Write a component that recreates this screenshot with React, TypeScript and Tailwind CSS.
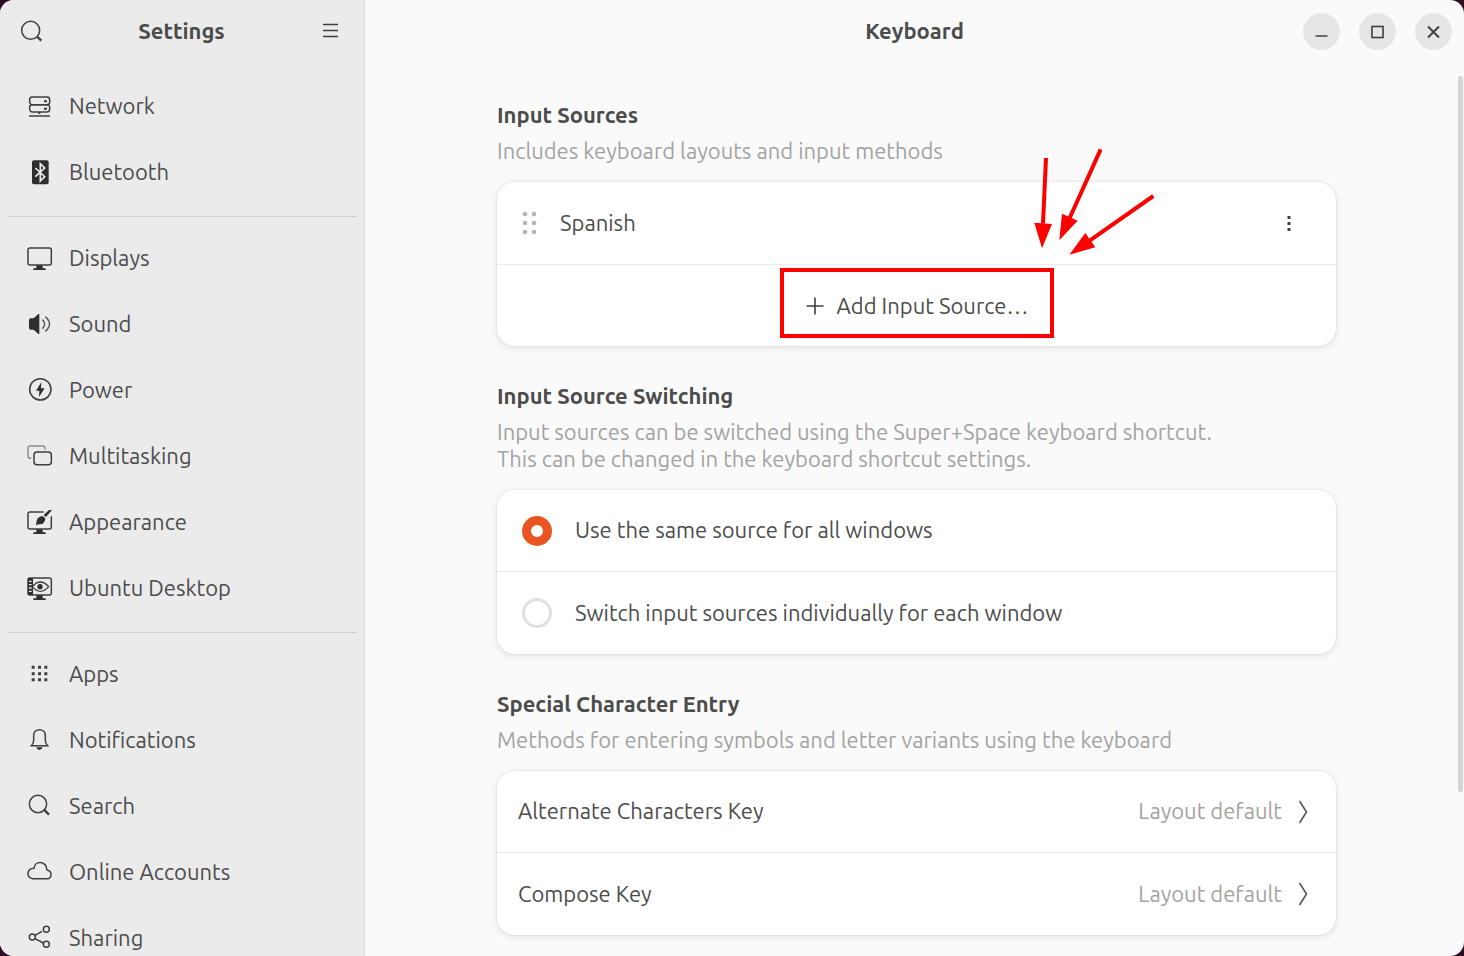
import { useState } from "react";
import type { ReactNode } from "react";

function Icon({ children }: { children: ReactNode }) {
  return (
    <svg
      viewBox="0 0 78 78"
      className="size-[26px] shrink-0"
      fill="none"
      stroke="#3f3f3f"
      strokeWidth="4.5"
      aria-hidden="true"
    >
      {children}
    </svg>
  );
}

const monitorStand = (
  <path d="M28 61H47V70H56V75H19V70H28Z" fill="#2e2e2e" stroke="none" />
);

const magnifier = (
  <>
    <circle cx="33" cy="33" r="26" />
    <path d="M51 50L66 65" strokeWidth="7" />
  </>
);

const icons: Record<string, ReactNode> = {
  Network: (
    <>
      <rect x="8" y="12" width="60" height="23" rx="8" />
      <rect x="8" y="35" width="60" height="22" rx="8" />
      <path d="M51 25H60M51 47H60M37 57V63" strokeWidth="6" />
      <path d="M6 69H69" />
    </>
  ),
  Bluetooth: (
    <>
      <rect x="15" y="4" width="50" height="72" rx="6" fill="#2e2e2e" stroke="none" />
      <path d="M25 27L53 53L40 66V14L53 27L25 53" stroke="#ebebeb" strokeWidth="5" />
    </>
  ),
  Displays: (
    <>
      <rect x="3" y="9" width="70" height="51" rx="6" />
      {monitorStand}
    </>
  ),
  Sound: (
    <>
      <path
        d="M12 22H20L34 9H37V69H34L20 56H12Q6 56 6 50V28Q6 22 12 22Z"
        fill="#2e2e2e"
        stroke="none"
      />
      <path d="M46 26Q60 39 46 53" stroke="#5a5a5a" />
      <path d="M55 17Q80 39 55 61" stroke="#5a5a5a" />
    </>
  ),
  Power: (
    <>
      <circle cx="40" cy="37" r="32" />
      <path d="M43 15L27 41H37L36 60L53 34H42Z" fill="#2e2e2e" stroke="none" />
    </>
  ),
  Multitasking: (
    <>
      <path d="M13 46H10Q3 46 3 39V16Q3 9 10 9H47Q54 9 54 16V20" stroke="#8f8f8f" />
      <rect x="21" y="27" width="52" height="38" rx="9" />
    </>
  ),
  Appearance: (
    <>
      <path d="M50 9H9Q3 9 3 15V54Q3 60 9 60H67Q73 60 73 54V22" />
      <path d="M66 3H75L57 24L50 18Z" fill="#2e2e2e" stroke="none" />
      <path
        d="M47 21L55 28Q53 45 42 46Q33 45 26 49Q29 42 29 35Q32 23 47 21Z"
        fill="#2e2e2e"
        stroke="none"
      />
      {monitorStand}
    </>
  ),
  "Ubuntu Desktop": (
    <>
      <rect x="3" y="9" width="70" height="51" rx="6" />
      <path d="M3 9H18V60H3Z" fill="#2e2e2e" stroke="none" />
      <path d="M6 19H14M6 29H14M6 39H14M6 49H14" stroke="#ebebeb" strokeWidth="4" />
      <path d="M16 35Q40 7 65 35Q40 63 16 35Z" strokeWidth="4" />
      <circle cx="39" cy="35" r="8" fill="#2e2e2e" stroke="none" />
      {monitorStand}
    </>
  ),
  Apps: (
    <path
      d="M14 19H23M33 19H42M52 19H61M14 38H23M33 38H42M52 38H61M14 56H23M33 56H42M52 56H61"
      strokeWidth="9"
    />
  ),
  Notifications: (
    <>
      <path d="M10 56H65M14 55Q20 50 20 40V26C20 2 55 2 55 26V40Q55 50 61 55" />
      <path d="M28 61H47Q44 69 37 69Q31 69 28 61Z" fill="#2e2e2e" stroke="none" />
    </>
  ),
  Search: magnifier,
  "Online Accounts": (
    <path d="M18 59H60C75 59 77 36 60 33C57 4 23 4 21 28C-3 29-2 59 18 59Z" />
  ),
  Sharing: (
    <>
      <circle cx="16" cy="36" r="9" />
      <circle cx="58" cy="13" r="9" />
      <circle cx="58" cy="58" r="9" />
      <path d="M24 31L45 19M24 41L49 54" />
    </>
  ),
};

const groups = [
  ["Network", "Bluetooth"],
  ["Displays", "Sound", "Power", "Multitasking", "Appearance", "Ubuntu Desktop"],
  ["Apps", "Notifications", "Search", "Online Accounts", "Sharing"],
];

function Sidebar() {
  return (
    <aside className="flex w-[365px] shrink-0 flex-col overflow-hidden border-r border-[#dcdcdc] bg-[#ebebeb]">
      <header className="flex h-[62px] shrink-0 items-center justify-between pr-5 pl-[19px]">
        <button aria-label="Search settings" className="flex size-[26px] items-center justify-center">
          <svg viewBox="0 0 78 78" className="size-[26px]" fill="none" stroke="#3f3f3f" strokeWidth="4.5">
            <circle cx="35" cy="37" r="27" />
            <path d="M54 56L67 68" strokeWidth="7" />
          </svg>
        </button>
        <h1 className="pb-0.5 font-bold">Settings</h1>
        <button aria-label="Main menu" className="flex size-[26px] items-center justify-center">
          <svg viewBox="0 0 26 26" className="size-[26px]" stroke="#3f3f3f" strokeWidth="1.6">
            <path d="M5 6.500H20M5 12.500H20M5 18.500H20" />
          </svg>
        </button>
      </header>
      <nav aria-label="Settings" className="pt-[11px]">
        {groups.map((group, index) => (
          <div key={group[0]}>
            {index > 0 && <hr className="mr-2 mt-[11px] mb-2 ml-[7px] h-px border-0 bg-[#cfcfcf]" />}
            <ul>
              {group.map((name) => (
                <li key={name}>
                  <a href="#" className="flex h-[66px] items-center gap-4 pl-[27px]">
                    <Icon>{icons[name]}</Icon>
                    <span className="pb-0.5">{name}</span>
                  </a>
                </li>
              ))}
            </ul>
          </div>
        ))}
      </nav>
    </aside>
  );
}

function Section({ title, text, children }: { title: string; text: ReactNode; children: ReactNode }) {
  return (
    <section>
      <h3 className="font-bold">{title}</h3>
      <p className="mt-[9px] text-[#a3a3a3]">{text}</p>
      <div className="relative mt-[18px] rounded-[18px] bg-white shadow-[0_0_0_1px_rgba(0,0,0,0.04),0_2px_6px_1px_rgba(0,0,0,0.08)]">
        {children}
      </div>
    </section>
  );
}

function WindowButton({ label, children }: { label: string; children: ReactNode }) {
  return (
    <button aria-label={label} className="flex size-[37px] items-center justify-center rounded-full bg-[#e6e6e6]">
      <svg viewBox="0 0 37 37" className="size-[37px]" fill="none" stroke="#3f3f3f" strokeWidth="1.6">
        {children}
      </svg>
    </button>
  );
}

function Pointers() {
  return (
    <svg
      viewBox="0 0 376 190"
      className="pointer-events-none absolute -top-[34px] left-1/2 -ml-[137px] h-[190px] w-[376px]"
      aria-hidden="true"
    >
      <rect x="2" y="122" width="270" height="66" fill="none" stroke="#ff0000" strokeWidth="4" />
      <g transform="translate(220 -18) scale(0.3333)" fill="#ff0000">
        <path d="M138 84L129 281M302 58L209 264M460 198L269 332" stroke="#ff0000" strokeWidth="12" />
        <path d="M103 278L156 282L126 355Z" />
        <path d="M186 251L233 272L178 331Z" />
        <path d="M256 309L286 352L208 374Z" />
      </g>
    </svg>
  );
}

const switching = [
  { id: "same", label: "Use the same source for all windows" },
  { id: "each", label: "Switch input sources individually for each window" },
];

export default function App() {
  const [mode, setMode] = useState("same");

  return (
    <div className="h-screen bg-[#300a24]">
      <div className="relative flex h-full overflow-hidden rounded-[14px] bg-[#fafafa] font-['Ubuntu','Noto_Sans',sans-serif] text-[22px] leading-[27px] text-[#4c4c4c]">
        <Sidebar />
        <main className="flex min-w-0 flex-1 flex-col overflow-hidden">
          <header className="grid h-[62px] shrink-0 grid-cols-[1fr_auto_1fr] items-center pr-3">
            <h2 className="col-start-2 pb-0.5 pl-3 font-bold">Keyboard</h2>
            <div className="flex justify-end gap-[19px]">
              <WindowButton label="Minimize">
                <path d="M12.500 23H24.500" />
              </WindowButton>
              <WindowButton label="Maximize">
                <rect x="13" y="13.500" width="11" height="11" />
              </WindowButton>
              <WindowButton label="Close">
                <path d="M13 13.500L24 24.500M24 13.500L13 24.500" strokeWidth="2" />
              </WindowButton>
            </div>
          </header>

          <div className="flex justify-center pt-[39px] pl-1">
            <div className="flex w-full max-w-[839px] flex-col gap-9">
              <Section title="Input Sources" text="Includes keyboard layouts and input methods">
                <div className="flex h-[83px] items-center border-b border-[#ebebeb] pr-[35px] pl-6">
                  <svg viewBox="0 0 16 26" className="h-[26px] w-4" fill="#b5b5b5" aria-hidden="true">
                    <circle cx="4" cy="4" r="2.300" />
                    <circle cx="13" cy="4" r="2.300" />
                    <circle cx="4" cy="13" r="2.300" />
                    <circle cx="13" cy="13" r="2.300" />
                    <circle cx="4" cy="22" r="2.300" />
                    <circle cx="13" cy="22" r="2.300" />
                  </svg>
                  <span className="flex-1 pb-0.5 pl-[23px]">Spanish</span>
                  <button aria-label="Spanish options" className="flex h-6 w-6 items-center justify-center">
                    <svg viewBox="0 0 24 24" className="size-6" fill="#3f3f3f">
                      <rect x="10.5" y="5" width="3" height="3" rx="0.5" />
                      <rect x="10.5" y="11" width="3" height="3" rx="0.5" />
                      <rect x="10.5" y="17" width="3" height="3" rx="0.5" />
                    </svg>
                  </button>
                </div>
                <button className="flex h-[81px] w-full items-center justify-center gap-3">
                  <svg viewBox="0 0 20 20" className="size-5" stroke="#3f3f3f" strokeWidth="1.6" aria-hidden="true">
                    <path d="M1.500 10H18.500M10 1.500V18.500" />
                  </svg>
                  Add Input Source…
                </button>
                <Pointers />
              </Section>

              <Section
                title="Input Source Switching"
                text={
                  <>
                    Input sources can be switched using the Super+Space keyboard shortcut.
                    <br />
                    This can be changed in the keyboard shortcut settings.
                  </>
                }
              >
                {switching.map((option) => (
                  <label
                    key={option.id}
                    className="flex h-[82px] items-center gap-[23px] border-[#ebebeb] pl-[25px] first:border-b"
                  >
                    <input
                      type="radio"
                      name="switching"
                      checked={mode === option.id}
                      onChange={() => setMode(option.id)}
                      className="size-[30px] appearance-none rounded-full border-[3px] border-[#e0e0e0] bg-white checked:border-[9px] checked:border-[#e95420]"
                    />
                    <span className="pb-0.5">{option.label}</span>
                  </label>
                ))}
              </Section>

              <Section
                title="Special Character Entry"
                text="Methods for entering symbols and letter variants using the keyboard"
              >
                {["Alternate Characters Key", "Compose Key"].map((name) => (
                  <button
                    key={name}
                    className="flex h-[82px] w-full items-center border-[#ebebeb] pr-7 pl-[21px] text-left first:border-b"
                  >
                    <span className="flex-1 pb-0.5">{name}</span>
                    <span className="pb-0.5 text-[#a3a3a3]">Layout default</span>
                    <svg
                      viewBox="0 0 10 24"
                      className="ml-4 h-6 w-2.5"
                      fill="none"
                      stroke="#555555"
                      strokeWidth="1.6"
                      aria-hidden="true"
                    >
                      <path d="M1.500 1L8.500 12L1.500 23" />
                    </svg>
                  </button>
                ))}
              </Section>
            </div>
          </div>
        </main>
        <div className="absolute top-[76px] right-px h-[716px] w-[5px] rounded-full bg-[#d5d5d5]" />
      </div>
    </div>
  );
}
